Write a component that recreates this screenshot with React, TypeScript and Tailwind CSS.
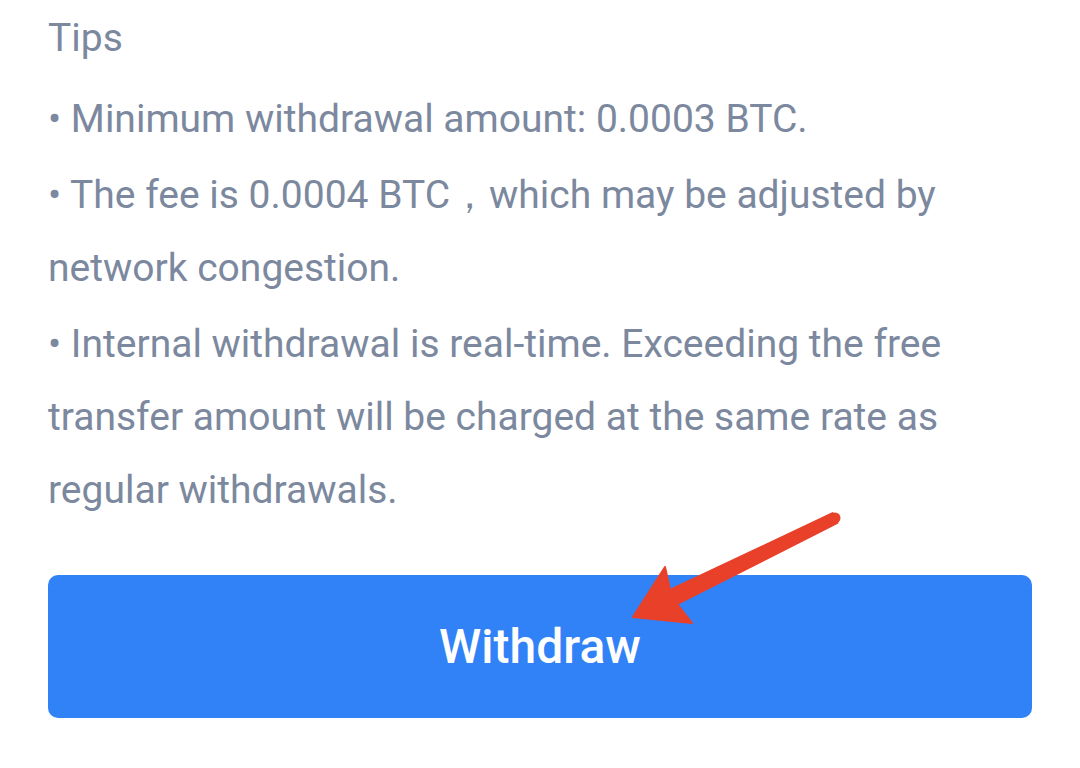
import React from "react";

const tipLines = [
  ["• Minimum withdrawal amount: 0.0003 BTC."],
  ["• The fee is 0.0004 BTC，which may be adjusted by", "network congestion."],
  [
    "• Internal withdrawal is real-time. Exceeding the free",
    "transfer amount will be charged at the same rate as",
    "regular withdrawals.",
  ],
];

const Arrow = () => (
  <svg
    className="absolute left-0 top-0 pointer-events-none"
    width="1080"
    height="768"
    viewBox="0 0 1080 768"
  >
    <path
      d="M832.6 513.1 L670 590 L665 567 L633 617 L692 623 L677 604 L837.4 522.9 Z"
      fill="#e9402a"
      stroke="#e9402a"
      strokeWidth="2"
      strokeLinejoin="round"
    />
    <circle cx="835" cy="518" r="5.5" fill="#e9402a" />
  </svg>
);

export default function App() {
  return (
    <div
      className="relative w-[1080px] h-[768px] bg-white overflow-hidden px-12"
      style={{ fontFamily: "Roboto, 'Noto Sans', sans-serif" }}
    >
      <div className="h-[76px] flex items-center text-[39px] text-[#7b889e]">Tips</div>
      <div className="flex flex-col gap-[3px] pt-[7px]">
        {tipLines.map((group, i) => (
          <div key={i} className="flex flex-col">
            {group.map((line, j) => (
              <div
                key={j}
                className="h-[73px] flex items-center text-[39px] text-[#7b889e] whitespace-nowrap"
              >
                {line}
              </div>
            ))}
          </div>
        ))}
      </div>
      <button className="mt-[48px] w-full h-[143px] rounded-[10px] bg-[#3182f6] text-white text-[48px] font-medium flex items-center justify-center">
        Withdraw
      </button>
      <Arrow />
    </div>
  );
}
